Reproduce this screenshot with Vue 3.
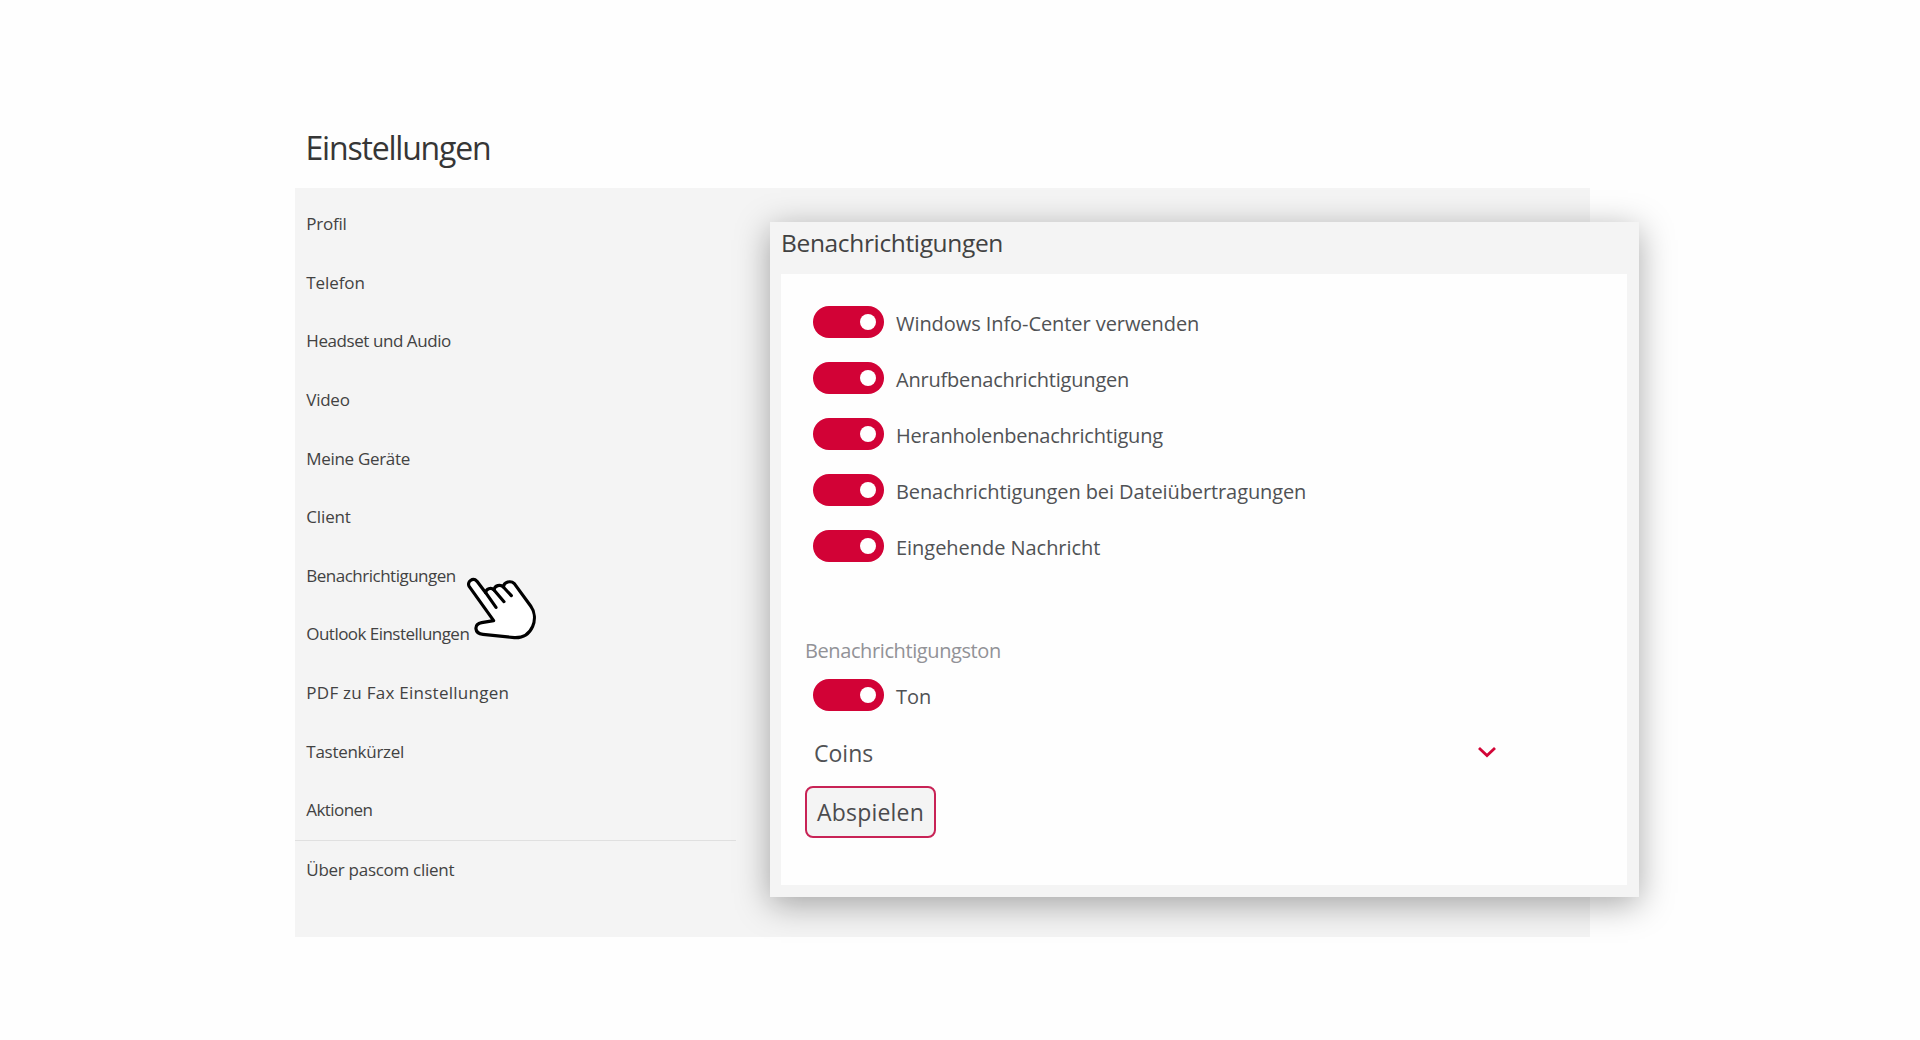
<script setup>
const menu = [
  { label: 'Profil', tracking: -0.25 },
  { label: 'Telefon', tracking: -0.1 },
  { label: 'Headset und Audio', tracking: -0.43 },
  { label: 'Video', tracking: -0.25 },
  { label: 'Meine Geräte', tracking: -0.32 },
  { label: 'Client', tracking: -0.15 },
  { label: 'Benachrichtigungen', tracking: -0.5 },
  { label: 'Outlook Einstellungen', tracking: -0.54 },
  { label: 'PDF zu Fax Einstellungen', tracking: 0.26 },
  { label: 'Tastenkürzel', tracking: -0.27 },
  { label: 'Aktionen', tracking: -0.58 }
]
const options = [
  { label: 'Windows Info-Center verwenden', tracking: -0.07 },
  { label: 'Anrufbenachrichtigungen', tracking: -0.2 },
  { label: 'Heranholenbenachrichtigung', tracking: -0.22 },
  { label: 'Benachrichtigungen bei Dateiübertragungen', tracking: -0.1 },
  { label: 'Eingehende Nachricht', tracking: -0.04 }
]
const spacing = (item) => ({ letterSpacing: item.tracking + 'px' })
</script>

<template>
  <main class="page">
    <h1 class="title">Einstellungen</h1>
    <section class="panel">
      <nav class="menu">
        <a v-for="item in menu" :key="item.label" class="menu-item" :style="spacing(item)">{{ item.label }}</a>
        <a class="menu-item about">Über pascom client</a>
      </nav>
      <svg class="cursor" viewBox="0 0 270 225" width="90" height="75">
        <g fill="#fff" stroke="#000" stroke-width="9.5" stroke-linecap="round" stroke-linejoin="round">
          <path d="M116 152 L43 50 C34 35 54 21 66 34 L92 68 C93 56 108 51 117 60 C119 46 136 42 145 51 C147 36 167 30 178 41 L227 108 C240 126 241 150 233 169 C223 192 204 204 178 203 L84 193 C57 190 56 163 80 158 Z" />
          <path d="M92 68 L123 112 M117 60 L147 95 M145 51 L169 77" />
        </g>
      </svg>
      <article class="card">
        <h2 class="card-title">Benachrichtigungen</h2>
        <div class="card-body">
          <div v-for="option in options" :key="option.label" class="option">
            <span class="toggle"></span>
            <span class="option-label" :style="spacing(option)">{{ option.label }}</span>
          </div>
          <h3 class="group">Benachrichtigungston</h3>
          <div class="option">
            <span class="toggle"></span>
            <span class="option-label">Ton</span>
          </div>
          <div class="select">
            <span>Coins</span>
            <svg width="20" height="13" viewBox="0 0 20 13">
              <path d="M2 2 L10 9.5 L18 2" fill="none" stroke="#d20537" stroke-width="2.8" />
            </svg>
          </div>
          <button class="play">Abspielen</button>
        </div>
      </article>
    </section>
  </main>
</template>

<style>
body {
  background: #fefefe;
}
</style>

<style scoped>
.page {
  box-sizing: border-box;
  width: 1920px;
  height: 1040px;
  padding: 108px 0 0 295px;
  overflow: hidden;
  font-family: "Open Sans", "Noto Sans", sans-serif;
  color: #424242;
}
.title {
  margin: 0;
  padding-left: 10.5px;
  height: 80px;
  font-size: 32px;
  line-height: 80px;
  font-weight: 400;
  letter-spacing: -1.2px;
  color: #363636;
}
.panel {
  position: relative;
  box-sizing: border-box;
  display: flex;
  width: 1295px;
  height: 749px;
  padding-top: 7px;
  background: #f4f4f4;
}
.menu {
  flex: none;
  width: 441px;
}
.menu-item {
  display: block;
  padding-left: 11.3px;
  height: 58.64px;
  line-height: 58.64px;
  font-size: 17px;
  white-space: nowrap;
}
.about {
  border-top: 1px solid #e0e0e0;
  line-height: 58.64px;
  letter-spacing: -0.28px;
}
.cursor {
  position: absolute;
  left: 160px;
  top: 382px;
}
.card {
  box-sizing: border-box;
  flex: none;
  width: 869px;
  height: 675px;
  margin: 27px 0 0 34px;
  padding: 0 12px 12px 11px;
  background: #f4f4f4;
  box-shadow: 0 7px 32px rgba(0, 0, 0, 0.34);
}
.card-title {
  margin: 0;
  height: 52px;
  line-height: 42px;
  font-size: 24.5px;
  font-weight: 400;
  letter-spacing: -0.35px;
}
.card-body {
  box-sizing: border-box;
  height: 611px;
  padding: 20.4px 0 0 24px;
  background: #fefefe;
}
.option {
  display: flex;
  align-items: center;
  gap: 12px;
  height: 56px;
  padding-left: 8px;
  color: #505255;
}
.toggle {
  box-sizing: border-box;
  display: flex;
  align-items: center;
  justify-content: flex-end;
  width: 71px;
  height: 32px;
  padding-right: 8px;
  border-radius: 16px;
  background: #d20236;
}
.toggle::after {
  content: "";
  width: 16px;
  height: 16px;
  border-radius: 50%;
  background: #fff;
}
.option-label {
  padding-top: 3px;
  font-size: 20px;
  line-height: 28px;
  white-space: nowrap;
}
.group {
  margin: 61px 0 0;
  height: 32px;
  line-height: 31px;
  font-size: 20px;
  font-weight: 400;
  letter-spacing: -0.4px;
  color: #929297;
}
.select {
  display: flex;
  align-items: center;
  justify-content: space-between;
  width: 683px;
  height: 59px;
  padding-left: 9px;
  font-size: 23px;
  color: #505255;
}
.play {
  box-sizing: border-box;
  display: block;
  width: 131px;
  height: 52px;
  margin-top: 3.6px;
  padding: 1px 0 0;
  border: 2px solid #c82356;
  border-radius: 8px;
  background: #f4f4f4;
  font: 23px "Open Sans", "Noto Sans", sans-serif;
  letter-spacing: 0.2px;
  color: #4b4b4e;
}
</style>
